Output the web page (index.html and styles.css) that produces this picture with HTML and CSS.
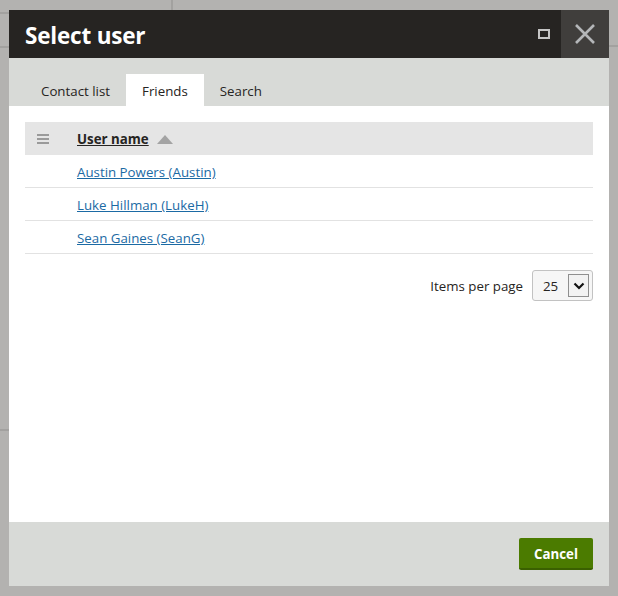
FILE: index.html
```html
<!DOCTYPE html>
<html>
<head>
<meta charset="utf-8">
<link rel="stylesheet" href="styles.css">
</head>
<body>
<div class="bg-line bg-v1"></div>
<div class="bg-line bg-h1"></div>
<div class="bg-line bg-h2"></div>
<div class="bg-line bg-h3"></div>
<div class="bg-line bg-h4"></div>
<div class="dialog">
  <div class="titlebar">
    <h1 class="title">Select user</h1>
    <div class="title-actions">
      <span class="maximize"></span>
      <button class="close" aria-label="Close">
        <svg width="22" height="22" viewBox="0 0 22 22"><path d="M2 2 L20 20 M20 2 L2 20" stroke="#b4b6b8" stroke-width="2.6" fill="none"/></svg>
      </button>
    </div>
  </div>
  <div class="tabs">
    <span class="tab">Contact list</span>
    <span class="tab active">Friends</span>
    <span class="tab">Search</span>
  </div>
  <div class="content">
    <table class="grid">
      <thead>
        <tr>
          <th class="col-menu">
            <svg width="12" height="10" viewBox="0 0 12 10"><rect x="0" y="0" width="12" height="2" fill="#9a9a9a"/><rect x="0" y="4" width="12" height="2" fill="#9a9a9a"/><rect x="0" y="8" width="12" height="2" fill="#9a9a9a"/></svg>
          </th>
          <th class="col-name"><span class="sort-link">User name</span><svg class="sort-icon" width="16" height="9" viewBox="0 0 16 9"><path d="M8 0 L16 9 L0 9 Z" fill="#a3a3a3"/></svg></th>
        </tr>
      </thead>
      <tbody>
        <tr><td><div class="cell"></div></td><td><div class="cell"><a href="#">Austin Powers (Austin)</a></div></td></tr>
        <tr><td><div class="cell"></div></td><td><div class="cell"><a href="#">Luke Hillman (LukeH)</a></div></td></tr>
        <tr><td><div class="cell"></div></td><td><div class="cell"><a href="#">Sean Gaines (SeanG)</a></div></td></tr>
      </tbody>
    </table>
    <div class="pager">
      <span class="pager-label">Items per page</span>
      <div class="select">
        <span class="select-value">25</span>
        <span class="select-arrow"><svg width="12" height="8" viewBox="0 0 12 8"><path d="M1.5 1.5 L6 6 L10.5 1.5" stroke="#111" stroke-width="2.2" fill="none"/></svg></span>
      </div>
    </div>
  </div>
  <div class="footer">
    <button class="btn-cancel">Cancel</button>
  </div>
</div>
</body>
</html>
```
FILE: styles.css
```css
html, body {
  margin: 0;
  padding: 0;
}
body {
  background: #b3b2b0;
  font-family: "Open Sans", "Noto Sans", sans-serif;
  font-size: 13.3px;
  color: #262422;
  width: 618px;
  height: 596px;
  overflow: hidden;
  position: relative;
  padding-top: 10px;
  box-sizing: border-box;
}
.bg-line {
  position: absolute;
  background: #a2a19f;
}
.bg-v1 { left: 171px; top: 0; width: 2px; height: 10px; }
.bg-h1 { left: 0; top: 12px; width: 9px; height: 2px; }
.bg-h2 { left: 0; top: 46px; width: 9px; height: 2px; }
.bg-h3 { left: 609px; top: 45px; width: 9px; height: 2px; }
.bg-h4 { left: 0; top: 429px; width: 9px; height: 2px; }

.dialog {
  margin-left: 9px;
  width: 600px;
  height: 576px;
  background: #fff;
  display: flex;
  flex-direction: column;
}
.titlebar {
  height: 48px;
  background: #262422;
  display: flex;
  align-items: center;
  justify-content: space-between;
  flex: none;
}
.title {
  margin: 0 0 0 16px;
  padding-top: 3px;
  color: #fff;
  font-size: 22.5px;
  font-weight: 700;
  letter-spacing: -0.2px;
}
.title-actions {
  display: flex;
  align-items: center;
  height: 100%;
}
.maximize {
  width: 8px;
  height: 6px;
  border: 2px solid #c5c5c5;
  margin-right: 11px;
}
.close {
  width: 48px;
  height: 48px;
  background: #403e3c;
  border: 0;
  padding: 0;
  display: flex;
  align-items: center;
  justify-content: center;
}
.tabs {
  height: 48px;
  background: #d8dad7;
  display: flex;
  align-items: flex-end;
  padding-left: 16px;
  flex: none;
}
.tab {
  height: 31px;
  padding: 1px 16px 0;
  line-height: 32px;
  color: #262422;
}
.tab.active {
  background: #fff;
}
.content {
  flex: 1;
  padding: 16px;
}
.grid {
  width: 100%;
  border-collapse: collapse;
}
.grid th {
  background: #e5e5e5;
  height: 33px;
  padding: 0;
  text-align: left;
  font-weight: 700;
}
.col-menu {
  width: 52px;
}
.col-menu svg {
  display: block;
  margin-left: 12px;
}
.col-name {
  white-space: nowrap;
}
.sort-link {
  text-decoration: underline;
  color: #262422;
  vertical-align: middle;
}
.sort-icon {
  vertical-align: middle;
  margin-left: 8px;
}
.grid td {
  padding: 0;
  border-bottom: 1px solid #e2e2e2;
}
.cell {
  height: 32px;
  box-sizing: border-box;
  padding-top: 1px;
  display: flex;
  align-items: center;
}
.grid a {
  color: #1b6aa4;
  text-decoration: underline;
}
.pager {
  display: flex;
  justify-content: flex-end;
  align-items: center;
  margin-top: 16px;
}
.pager-label {
  margin-right: 9px;
  padding-top: 1px;
}
.select {
  width: 61px;
  height: 31px;
  box-sizing: border-box;
  border: 1px solid #c2c2c2;
  border-radius: 3px;
  background: #f6f6f6;
  display: flex;
  align-items: center;
  padding-left: 10px;
}
.select-value {
  flex: 1;
}
.select-arrow {
  width: 19px;
  height: 21px;
  border: 1px solid #8f8f8f;
  background: #f2f2f2;
  margin-right: 3px;
  display: flex;
  align-items: center;
  justify-content: center;
}
.footer {
  height: 64px;
  background: #d8dad7;
  display: flex;
  align-items: center;
  justify-content: flex-end;
  padding-right: 16px;
  flex: none;
}
.btn-cancel {
  width: 74px;
  height: 32px;
  background: #4b7b00;
  border: 0;
  border-bottom: 2px solid #3a6000;
  border-radius: 2px;
  color: #fff;
  font-family: "Open Sans", "Noto Sans", sans-serif;
  font-size: 13.3px;
  font-weight: 700;
  padding: 2px 0 0;
}
```
